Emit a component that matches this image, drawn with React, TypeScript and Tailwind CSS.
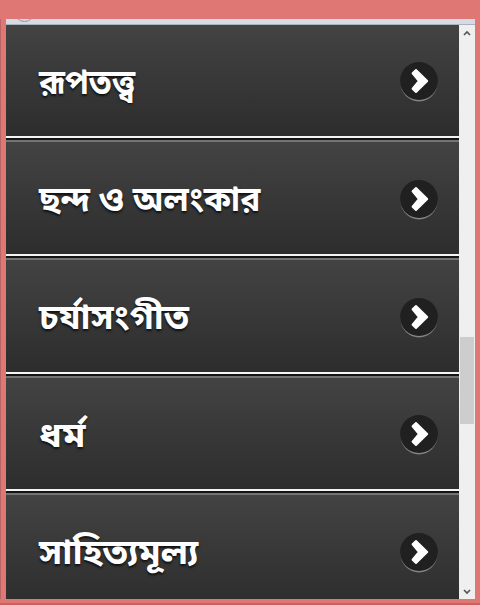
const rows = [
  { label: "রূপতত্ত্ব", height: "h-[111px]", stretch: "scale-x-[1.01]" },
  { label: "ছন্দ ও অলংকার", height: "h-[112px]", stretch: "scale-x-[1.043]" },
  { label: "চর্যাসংগীত", height: "h-[112px]", stretch: "scale-x-[1.11]" },
  { label: "ধর্ম", height: "h-[111px]", stretch: "scale-x-[1.18]" },
  { label: "সাহিত্যমূল্য", height: "h-[112px]", stretch: "scale-x-[1.13]" },
];

function Arrow() {
  return (
    <span className="mt-px flex h-[38px] w-[38px] shrink-0 items-center justify-center rounded-full bg-[#202020] shadow-[0_2px_0_-0.5px_#858585]">
      <svg className="ml-[2px]" width="20" height="26" viewBox="0 0 20 26" fill="white" stroke="white" strokeWidth="2" strokeLinejoin="round">
        <path d="M6 2 L17.2 13 L6 24 L2.6 20.7 L9 13 L2.6 5.3 Z" />
      </svg>
    </span>
  );
}

export default function App() {
  return (
    <div className="flex h-[605px] w-[480px] flex-col overflow-hidden bg-[#df7775] font-['Noto_Sans_Bengali','Noto_Sans',sans-serif]">
      <div className="h-[19px] shrink-0" />
      <div className="flex h-[580px] shrink-0 border-l border-[#b96563]">
        <div className="w-[5px] shrink-0" />
        <div className="flex w-[469px] flex-col">
          <div className="h-[6px] shrink-0 overflow-hidden border-b border-[#a9b3bd] bg-[#d9d9e6]">
            <div className="-mt-[18px] ml-[8px] h-[21px] w-[21px] rounded-full border border-[#9d9099]" />
          </div>
          <div className="flex h-[574px]">
            <div className="w-[453px] overflow-hidden">
              {rows.map((row, i) => (
                <div key={row.label}>
                  {i > 0 && (
                    <div>
                      <div className="h-[2px] bg-[#f4f4f4]" />
                      <div className="h-[2px] bg-[#141414]" />
                      <div className="h-[2px] bg-[#747474]" />
                    </div>
                  )}
                  <div className={`${row.height} flex items-center justify-between bg-linear-to-b from-[#434343] to-[#2d2d2d] pr-[21px] pl-[33px]`}>
                    <span className={`${row.stretch} mt-[10px] origin-left scale-y-[1.06] text-[32px] leading-none font-bold whitespace-nowrap text-white [text-shadow:0_1px_2px_#111]`}>{row.label}</span>
                    <Arrow />
                  </div>
                </div>
              ))}
            </div>
            <div className="flex w-4 flex-col items-center bg-[#f0eff0]">
              <svg className="mt-[5px]" width="8" height="7" fill="none" stroke="#555" strokeWidth="1.7"><path d="M1 5 L4 2 L7 5" /></svg>
              <div className="mt-[300px] h-[87px] w-[14px] bg-[#cdcdcd]" />
              <svg className="mt-[164px]" width="8" height="7" fill="none" stroke="#555" strokeWidth="1.7"><path d="M1 2 L4 5 L7 2" /></svg>
            </div>
          </div>
        </div>
      </div>
      <div className="mt-[4px] h-[2px] shrink-0 bg-[#c8605e]" />
    </div>
  );
}
